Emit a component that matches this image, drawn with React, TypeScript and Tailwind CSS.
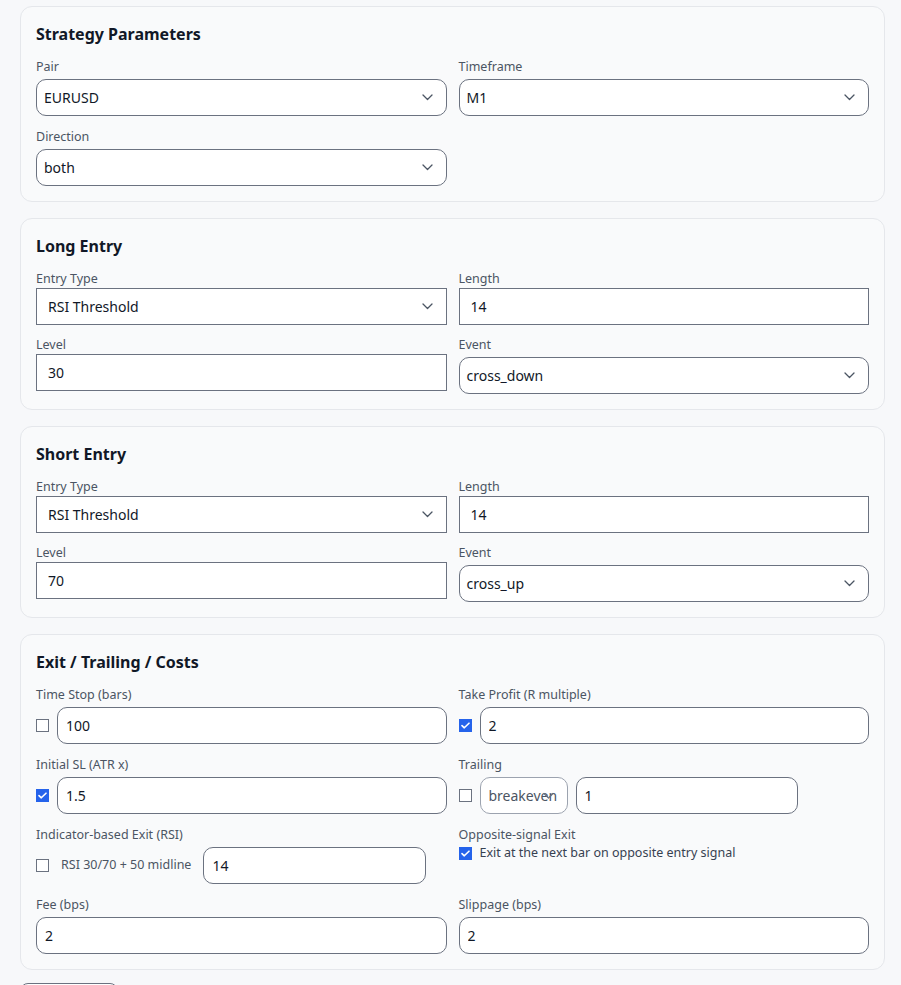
import React from 'react';

const Chevron: React.FC<{ faint?: boolean }> = ({ faint }) => (
  <svg width="11" height="7" viewBox="0 0 11 7" fill="none" className="shrink-0">
    <path
      d="M1 1L5.5 5.5L10 1"
      stroke={faint ? '#6b7280' : '#4b5563'}
      strokeWidth="1.3"
      strokeLinecap="round"
      strokeLinejoin="round"
    />
  </svg>
);

const Check: React.FC<{ checked?: boolean }> = ({ checked }) =>
  checked ? (
    <span className="flex h-[13px] w-[13px] shrink-0 items-center justify-center bg-[#2563eb]">
      <svg width="9" height="7" viewBox="0 0 9 7" fill="none">
        <path d="M1 3.6L3.3 5.8L8 1.2" stroke="white" strokeWidth="1.6" strokeLinecap="round" strokeLinejoin="round" />
      </svg>
    </span>
  ) : (
    <span className="h-[13px] w-[13px] shrink-0 border border-[#6b7280] bg-white" />
  );

const Label: React.FC<{ children: React.ReactNode }> = ({ children }) => (
  <label className="block text-[12.5px] leading-[19px] text-[#4b5563]">{children}</label>
);

// rounded select look
const Select: React.FC<{ value: string }> = ({ value }) => (
  <div className="mt-[3px] flex h-[37px] items-center justify-between rounded-[10px] border border-[#6b7280] bg-white pl-[7px] pr-[13px] text-sm text-[#111827]">
    <span>{value}</span>
    <Chevron />
  </div>
);

// square select (entry type)
const SquareSelect: React.FC<{ value: string }> = ({ value }) => (
  <div className="flex h-[37px] items-center justify-between border border-[#6b7280] bg-white pl-[11px] pr-[13px] text-sm text-[#111827]">
    <span>{value}</span>
    <Chevron />
  </div>
);

const SquareInput: React.FC<{ value: string }> = ({ value }) => (
  <input
    defaultValue={value}
    className="h-[37px] w-full border border-[#6b7280] bg-white pl-[11px] text-sm text-[#111827] outline-none"
  />
);

const Input: React.FC<{ value: string; className?: string }> = ({ value, className = 'w-full' }) => (
  <input
    defaultValue={value}
    className={`h-[37px] rounded-[10px] border border-[#6b7280] bg-white pl-2 text-sm text-[#111827] outline-none ${className}`}
  />
);

const Card: React.FC<{ title: string; wide?: boolean; children: React.ReactNode }> = ({ title, wide, children }) => (
  <section className="rounded-xl border border-[#e5e7eb] bg-[#f9fafb] p-[15px]">
    <h2 className="mb-[11px] text-base font-bold leading-6 text-[#111827]">{title}</h2>
    <div className={`grid grid-cols-2 gap-x-3 ${wide ? 'gap-y-[11px]' : 'gap-y-2.5'}`}>{children}</div>
  </section>
);

const EntryCard: React.FC<{ title: string; level: string; event: string }> = ({ title, level, event }) => (
  <Card title={title}>
    <div>
      <Label>Entry Type</Label>
      <SquareSelect value="RSI Threshold" />
    </div>
    <div>
      <Label>Length</Label>
      <SquareInput value="14" />
    </div>
    <div>
      <Label>Level</Label>
      <SquareInput value={level} />
    </div>
    <div>
      <Label>Event</Label>
      <Select value={event} />
    </div>
  </Card>
);

export default function App() {
  return (
    <div className="min-h-screen bg-[#f7f8fa] pb-6 pl-5 pr-4 pt-1.5 font-['Noto_Sans',sans-serif]">
      <div className="flex flex-col gap-4">
        {/* Strategy */}
        <Card title="Strategy Parameters" wide>
          <div>
            <Label>Pair</Label>
            <Select value="EURUSD" />
          </div>
          <div>
            <Label>Timeframe</Label>
            <Select value="M1" />
          </div>
          <div>
            <Label>Direction</Label>
            <Select value="both" />
          </div>
        </Card>

        <EntryCard title="Long Entry" level="30" event="cross_down" />
        <EntryCard title="Short Entry" level="70" event="cross_up" />

        {/* Exits */}
        <Card title="Exit / Trailing / Costs" wide>
          <div>
            <Label>Time Stop (bars)</Label>
            <div className="mt-[3px] flex items-center gap-2">
              <Check />
              <Input value="100" className="flex-1" />
            </div>
          </div>
          <div>
            <Label>Take Profit (R multiple)</Label>
            <div className="mt-[3px] flex items-center gap-2">
              <Check checked />
              <Input value="2" className="flex-1" />
            </div>
          </div>
          <div>
            <Label>Initial SL (ATR x)</Label>
            <div className="mt-[3px] flex items-center gap-2">
              <Check checked />
              <Input value="1.5" className="flex-1" />
            </div>
          </div>
          <div>
            <Label>Trailing</Label>
            <div className="mt-[3px] flex items-center gap-2">
              <Check />
              <div className="relative flex h-[37px] w-[88px] items-center overflow-hidden rounded-[10px] border border-[#9ca3af] bg-white pl-2 text-sm text-[#4b5563]">
                <span className="whitespace-nowrap">breakeven</span>
                <span className="absolute right-[13px] top-1/2 z-10 flex -translate-y-1/2">
                  <Chevron faint />
                </span>
              </div>
              <Input value="1" className="w-[222px]" />
            </div>
          </div>
          <div>
            <Label>Indicator-based Exit (RSI)</Label>
            <div className="mt-[3px] flex items-center gap-3">
              <Check />
              <span className="text-[12.5px] text-[#4b5563]">RSI 30/70 + 50 midline</span>
              <Input value="14" className="w-[223px]" />
            </div>
          </div>
          <div>
            <Label>Opposite-signal Exit</Label>
            <div className="flex h-[18px] items-center gap-2">
              <Check checked />
              <span className="text-[12.5px] text-[#374151]">Exit at the next bar on opposite entry signal</span>
            </div>
          </div>
          <div>
            <Label>Fee (bps)</Label>
            <div className="mt-[3px]">
              <Input value="2" />
            </div>
          </div>
          <div>
            <Label>Slippage (bps)</Label>
            <div className="mt-[3px]">
              <Input value="2" />
            </div>
          </div>
        </Card>
      </div>

      <button className="mt-[13px] w-[98px] rounded-lg border border-[#6b7280] bg-white py-4 text-[13px] text-[#111827]">
        Run Backtest
      </button>
    </div>
  );
}
